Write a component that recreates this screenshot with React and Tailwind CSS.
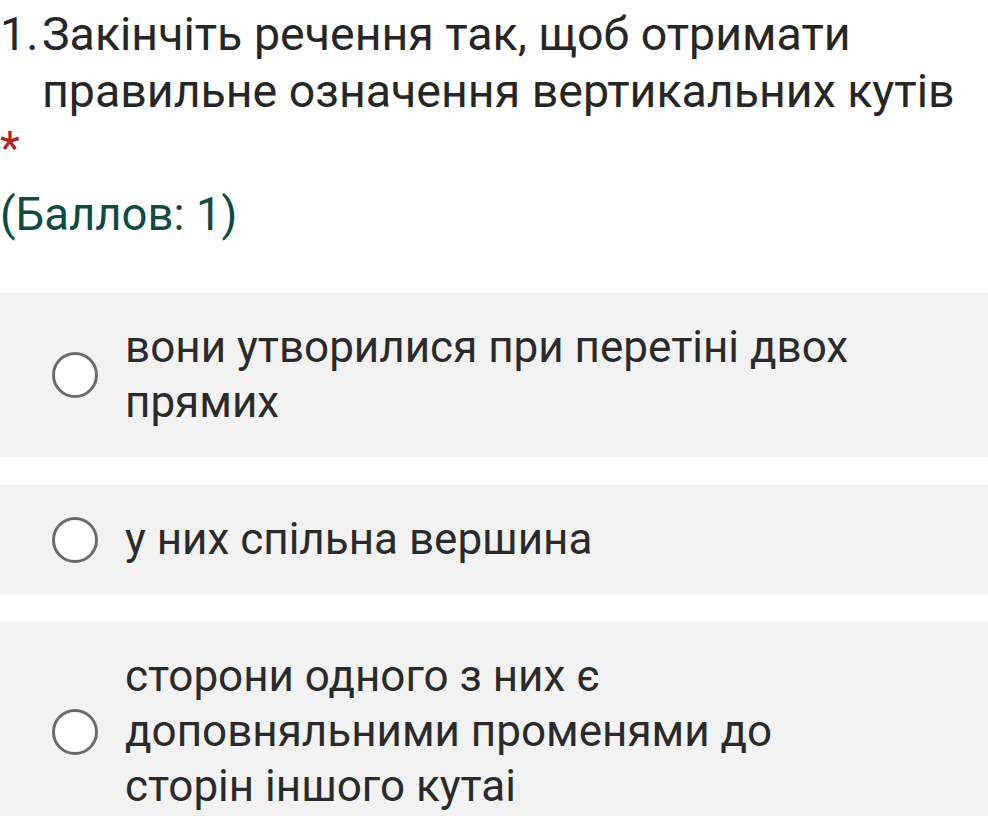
const options = [
  "вони утворилися при перетіні двох прямих",
  "у них спільна вершина",
  "сторони одного з них є доповняльними променями до сторін іншого кутаі",
];

function Radio() {
  return (
    <span className="block size-[46px] shrink-0 rounded-full border-[3px] border-[#6b6b6b] bg-white" />
  );
}

export default function App() {
  return (
    <div className="min-h-[816px] w-[988px] overflow-hidden bg-white font-['Roboto',sans-serif] text-[#262626]">
      <div className="flex pt-[6px] text-[46.5px] leading-[57px]">
        <span className="w-[42px] shrink-0">1.</span>
        <span>Закінчіть речення так, щоб отримати правильне означення вертикальних кутів</span>
      </div>
      <div className="text-[46px] leading-[57px] text-[#b3261e]">*</div>
      <div className="mt-[9px] text-[45.5px] leading-[57px] text-[#0e4b45]">(Баллов: 1)</div>

      <div className="mt-[50px] flex flex-col gap-[28px]">
        {options.map((text) => (
          <label
            key={text}
            className="flex items-center gap-[27px] bg-[#f2f2f2] py-[27px] pl-[52px]"
          >
            <Radio />
            <span className="max-w-[750px] text-[44px] leading-[55px] text-[#2a2a2a]">{text}</span>
          </label>
        ))}
      </div>
    </div>
  );
}
